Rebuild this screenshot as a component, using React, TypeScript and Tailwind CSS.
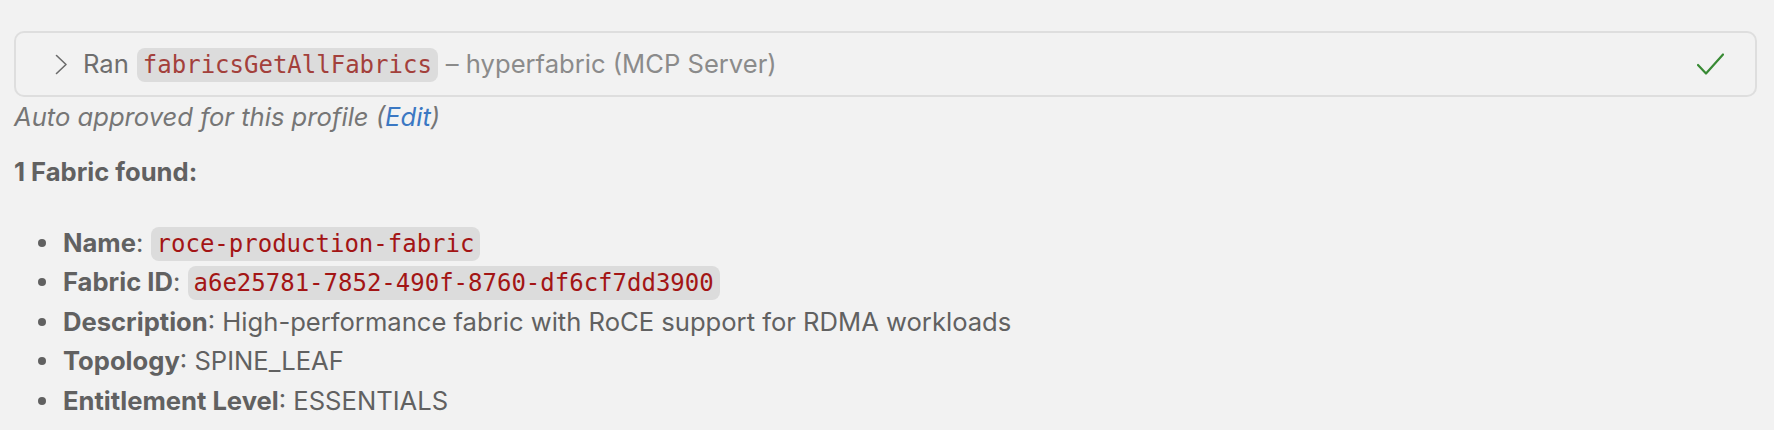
import React from 'react';

const sans = { fontFamily: 'Inter, "Noto Sans", sans-serif' };

function Code({ children, header = false }: { children: React.ReactNode; header?: boolean }) {
  return (
    <code
      className={
        'rounded-[8px] bg-[#dcdcdc] px-[6px] py-[3px] text-[24px] leading-[28px] ' +
        (header ? 'text-[#a3403b]' : 'text-[#a31515]')
      }
      style={{ fontFamily: '"DejaVu Sans Mono", "Liberation Mono", monospace' }}
    >
      {children}
    </code>
  );
}

function Item({ label, children }: { label: string; children: React.ReactNode }) {
  return (
    <li className="flex items-center h-[39.5px]">
      <span className="w-[8px] h-[8px] rounded-full bg-[#616161] ml-[24px] mr-[17px] shrink-0" />
      <span>
        <strong className="font-bold">{label}</strong>: {children}
      </span>
    </li>
  );
}

export default function App() {
  return (
    <div className="min-h-screen w-full bg-[#f2f2f2] pt-[31px] pl-[14px] pr-[17px] text-[25.6px] text-[#616161]" style={sans}>
      {/* Tool call header */}
      <div className="h-[66px] border-2 border-[#dedede] rounded-[10px] flex items-center pl-[39px] pr-[31px]">
        <svg width="13" height="21" viewBox="0 0 13 21" fill="none" className="shrink-0">
          <path d="M1.5 1.5 L11 10.5 L1.5 19.5" stroke="#6b6b6b" strokeWidth="1.6" strokeLinecap="round" strokeLinejoin="round" />
        </svg>
        <div className="ml-[15px] flex items-center whitespace-nowrap leading-[34px]">
          <span className="text-[#6e6e6e]">Ran</span>
          <span className="ml-[8px]">
            <Code header>fabricsGetAllFabrics</Code>
          </span>
          <span className="ml-[8px] text-[#8b8b8b]">– hyperfabric (MCP Server)</span>
        </div>
        <div className="flex-1" />
        <svg width="27" height="23" viewBox="0 0 27 23" fill="none" className="shrink-0">
          <path d="M1 12 L9 20.5 L26 1.5" stroke="#388a34" strokeWidth="2.2" strokeLinecap="round" strokeLinejoin="round" />
        </svg>
      </div>

      <p className="italic text-[#767676] leading-[39px]">
        Auto approved for this profile (<span className="text-[#3b78c3]">Edit</span>)
      </p>

      <p className="font-bold leading-[39px] mt-[16px]">1 Fabric found:</p>

      <ul className="mt-[32px]">
        <Item label="Name">
          <Code>roce-production-fabric</Code>
        </Item>
        <Item label="Fabric ID">
          <Code>a6e25781-7852-490f-8760-df6cf7dd3900</Code>
        </Item>
        <Item label="Description">High-performance fabric with RoCE support for RDMA workloads</Item>
        <Item label="Topology">SPINE_LEAF</Item>
        <Item label="Entitlement Level">ESSENTIALS</Item>
      </ul>
    </div>
  );
}
